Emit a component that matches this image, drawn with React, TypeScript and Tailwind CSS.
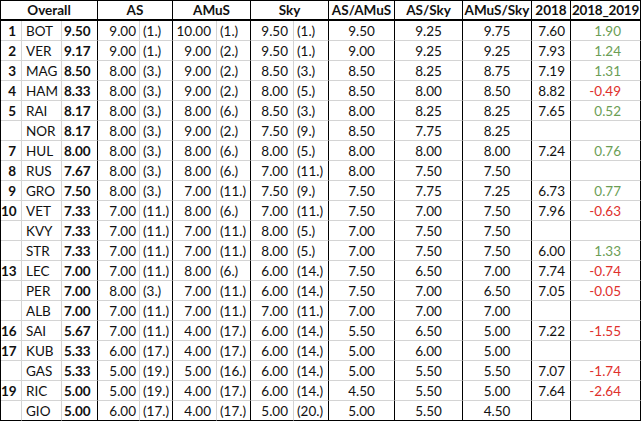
import React from "react";

type Row = {
  rank: string;
  name: string;
  score: string;
  as: [string, string];
  am: [string, string];
  sky: [string, string];
  asam: string;
  assky: string;
  amsky: string;
  y18: string;
  diff: string;
};

const rows: Row[] = [
  { rank: "1", name: "BOT", score: "9.50", as: ["9.00", "(1.)"], am: ["10.00", "(1.)"], sky: ["9.50", "(1.)"], asam: "9.50", assky: "9.25", amsky: "9.75", y18: "7.60", diff: "1.90" },
  { rank: "2", name: "VER", score: "9.17", as: ["9.00", "(1.)"], am: ["9.00", "(2.)"], sky: ["9.50", "(1.)"], asam: "9.00", assky: "9.25", amsky: "9.25", y18: "7.93", diff: "1.24" },
  { rank: "3", name: "MAG", score: "8.50", as: ["8.00", "(3.)"], am: ["9.00", "(2.)"], sky: ["8.50", "(3.)"], asam: "8.50", assky: "8.25", amsky: "8.75", y18: "7.19", diff: "1.31" },
  { rank: "4", name: "HAM", score: "8.33", as: ["8.00", "(3.)"], am: ["9.00", "(2.)"], sky: ["8.00", "(5.)"], asam: "8.50", assky: "8.00", amsky: "8.50", y18: "8.82", diff: "-0.49" },
  { rank: "5", name: "RAI", score: "8.17", as: ["8.00", "(3.)"], am: ["8.00", "(6.)"], sky: ["8.50", "(3.)"], asam: "8.00", assky: "8.25", amsky: "8.25", y18: "7.65", diff: "0.52" },
  { rank: "", name: "NOR", score: "8.17", as: ["8.00", "(3.)"], am: ["9.00", "(2.)"], sky: ["7.50", "(9.)"], asam: "8.50", assky: "7.75", amsky: "8.25", y18: "", diff: "" },
  { rank: "7", name: "HUL", score: "8.00", as: ["8.00", "(3.)"], am: ["8.00", "(6.)"], sky: ["8.00", "(5.)"], asam: "8.00", assky: "8.00", amsky: "8.00", y18: "7.24", diff: "0.76" },
  { rank: "8", name: "RUS", score: "7.67", as: ["8.00", "(3.)"], am: ["8.00", "(6.)"], sky: ["7.00", "(11.)"], asam: "8.00", assky: "7.50", amsky: "7.50", y18: "", diff: "" },
  { rank: "9", name: "GRO", score: "7.50", as: ["8.00", "(3.)"], am: ["7.00", "(11.)"], sky: ["7.50", "(9.)"], asam: "7.50", assky: "7.75", amsky: "7.25", y18: "6.73", diff: "0.77" },
  { rank: "10", name: "VET", score: "7.33", as: ["7.00", "(11.)"], am: ["8.00", "(6.)"], sky: ["7.00", "(11.)"], asam: "7.50", assky: "7.00", amsky: "7.50", y18: "7.96", diff: "-0.63" },
  { rank: "", name: "KVY", score: "7.33", as: ["7.00", "(11.)"], am: ["7.00", "(11.)"], sky: ["8.00", "(5.)"], asam: "7.00", assky: "7.50", amsky: "7.50", y18: "", diff: "" },
  { rank: "", name: "STR", score: "7.33", as: ["7.00", "(11.)"], am: ["7.00", "(11.)"], sky: ["8.00", "(5.)"], asam: "7.00", assky: "7.50", amsky: "7.50", y18: "6.00", diff: "1.33" },
  { rank: "13", name: "LEC", score: "7.00", as: ["7.00", "(11.)"], am: ["8.00", "(6.)"], sky: ["6.00", "(14.)"], asam: "7.50", assky: "6.50", amsky: "7.00", y18: "7.74", diff: "-0.74" },
  { rank: "", name: "PER", score: "7.00", as: ["8.00", "(3.)"], am: ["7.00", "(11.)"], sky: ["6.00", "(14.)"], asam: "7.50", assky: "7.00", amsky: "6.50", y18: "7.05", diff: "-0.05" },
  { rank: "", name: "ALB", score: "7.00", as: ["7.00", "(11.)"], am: ["7.00", "(11.)"], sky: ["7.00", "(11.)"], asam: "7.00", assky: "7.00", amsky: "7.00", y18: "", diff: "" },
  { rank: "16", name: "SAI", score: "5.67", as: ["7.00", "(11.)"], am: ["4.00", "(17.)"], sky: ["6.00", "(14.)"], asam: "5.50", assky: "6.50", amsky: "5.00", y18: "7.22", diff: "-1.55" },
  { rank: "17", name: "KUB", score: "5.33", as: ["6.00", "(17.)"], am: ["4.00", "(17.)"], sky: ["6.00", "(14.)"], asam: "5.00", assky: "6.00", amsky: "5.00", y18: "", diff: "" },
  { rank: "", name: "GAS", score: "5.33", as: ["5.00", "(19.)"], am: ["5.00", "(16.)"], sky: ["6.00", "(14.)"], asam: "5.00", assky: "5.50", amsky: "5.50", y18: "7.07", diff: "-1.74" },
  { rank: "19", name: "RIC", score: "5.00", as: ["5.00", "(19.)"], am: ["4.00", "(17.)"], sky: ["6.00", "(14.)"], asam: "4.50", assky: "5.50", amsky: "5.00", y18: "7.64", diff: "-2.64" },
  { rank: "", name: "GIO", score: "5.00", as: ["6.00", "(17.)"], am: ["4.00", "(17.)"], sky: ["5.00", "(20.)"], asam: "5.00", assky: "5.50", amsky: "4.50", y18: "", diff: "" },
];

// cell base: one spreadsheet cell, 20px tall incl. bottom border
const cell = "h-[20px] pt-[2px] leading-[17px] whitespace-nowrap overflow-hidden border-b";
const gray = "border-r border-r-[#d4d4d4]";
const black = "border-r border-r-black";

const head = "h-[20px] pt-[1px] leading-[17px] font-bold text-center whitespace-nowrap overflow-hidden border-b-2 border-b-black border-r border-r-black";

const App = () => {
  return (
    <div className="bg-white w-[641px] h-[421px] text-[13.5px] text-[#111]" style={{ fontFamily: "Lato, 'Open Sans', sans-serif" }}>
      <div className="grid grid-cols-[21px_40px_36px_42px_33px_44px_34px_43px_35px_66px_68px_69px_39px_70px] border-l border-t border-black">
        <div className={`col-span-3 ${head}`}>Overall</div>
        <div className={`col-span-2 ${head}`}>AS</div>
        <div className={`col-span-2 ${head}`}>AMuS</div>
        <div className={`col-span-2 ${head}`}>Sky</div>
        <div className={head}>AS/AMuS</div>
        <div className={head}>AS/Sky</div>
        <div className={head}>AMuS/Sky</div>
        <div className={head}>2018</div>
        <div className={`${head} tracking-[-0.2px]`}>2018_2019</div>

        {rows.map((r, i) => {
          const b = i === rows.length - 1 ? "border-b-black" : "border-b-[#d4d4d4]";
          const neg = r.diff.startsWith("-");
          return (
            <React.Fragment key={r.name}>
              <div className={`${cell} ${b} ${gray} text-right pr-[5px] font-bold`}>{r.rank}</div>
              <div className={`${cell} ${b} ${gray} pl-[4px]`}>{r.name}</div>
              <div className={`${cell} ${b} ${black} pl-[2px] font-bold`}>{r.score}</div>
              <div className={`${cell} ${b} ${gray} text-right pr-[3px]`}>{r.as[0]}</div>
              <div className={`${cell} ${b} ${black} pl-[3px]`}>{r.as[1]}</div>
              <div className={`${cell} ${b} ${gray} text-right pr-[5px]`}>{r.am[0]}</div>
              <div className={`${cell} ${b} ${black} pl-[3px]`}>{r.am[1]}</div>
              <div className={`${cell} ${b} ${gray} text-right pr-[5px]`}>{r.sky[0]}</div>
              <div className={`${cell} ${b} ${black} pl-[3px]`}>{r.sky[1]}</div>
              <div className={`${cell} ${b} ${black} text-center`}>{r.asam}</div>
              <div className={`${cell} ${b} ${black} text-center`}>{r.assky}</div>
              <div className={`${cell} ${b} ${black} text-center`}>{r.amsky}</div>
              <div className={`${cell} ${b} ${black} text-right pr-[5px]`}>{r.y18}</div>
              <div className={`${cell} ${b} ${black} text-right pr-[19px] ${neg ? "text-[#e0302c]" : "text-[#6b9e55]"}`}>{r.diff}</div>
            </React.Fragment>
          );
        })}
      </div>
    </div>
  );
};

export default App;
